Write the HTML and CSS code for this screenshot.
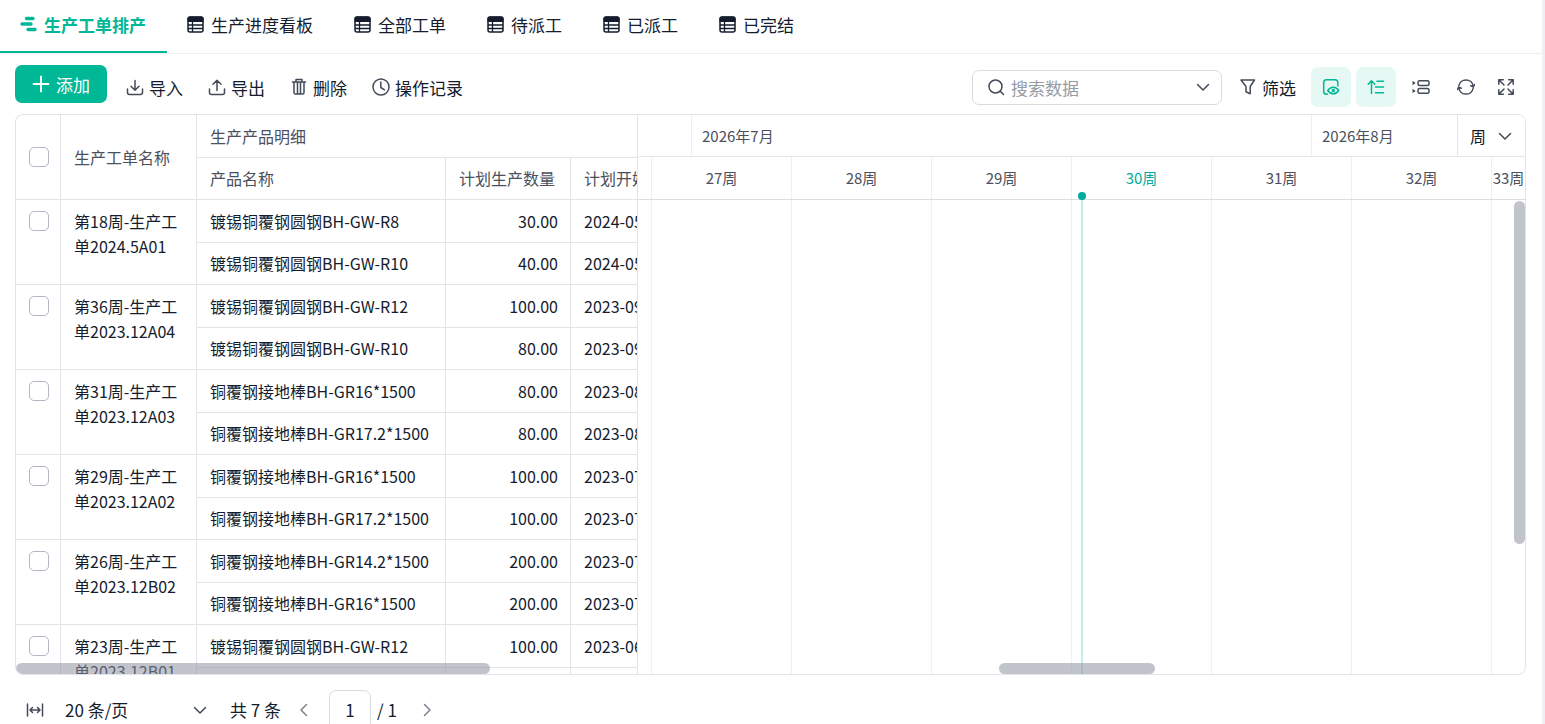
FILE: index.html
```html
<!DOCTYPE html>
<html lang="zh-CN">
<head>
    <title>生产工单排产</title>
    <meta charset="utf-8">
    <meta name="viewport" content="width=device-width, initial-scale=1.0">
    <link rel="stylesheet" href="styles.css">
</head>
<body>
<svg class="symbols" aria-hidden="true">
    <symbol id="i-table" viewBox="0 0 17 17">
        <rect x="1" y="1" width="15" height="15" rx="2" fill="none" stroke="currentColor" stroke-width="1.5"/>
        <path d="M.500 3q0-2.500 2.500-2.500h11q2.500 0 2.500 2.500v3H.500z" fill="currentColor"/>
        <path d="M1 9h15M1 12.500h15M5.500 5v11" fill="none" stroke="currentColor" stroke-width="1.300"/>
    </symbol>
    <symbol id="i-down" viewBox="0 0 14 14">
        <path d="M1.500 4.500l5.500 5.500 5.500-5.500" fill="none" stroke="currentColor" stroke-width="1.5" stroke-linecap="round" stroke-linejoin="round"/>
    </symbol>
</svg>
<div class="app">
    <nav class="tabs">
        <a class="tab tab-active" href="#">
            <svg class="tab-icon" viewBox="0 0 17 17"><path d="M6.500 2.500h6.500M2 8h9M8 13.500h7" fill="none" stroke="currentColor" stroke-width="3.400" stroke-linecap="round"/></svg>生产工单排产</a>
        <a class="tab" href="#"><svg class="tab-icon"><use href="#i-table"/></svg>生产进度看板</a>
        <a class="tab" href="#"><svg class="tab-icon"><use href="#i-table"/></svg>全部工单</a>
        <a class="tab" href="#"><svg class="tab-icon"><use href="#i-table"/></svg>待派工</a>
        <a class="tab" href="#"><svg class="tab-icon"><use href="#i-table"/></svg>已派工</a>
        <a class="tab" href="#"><svg class="tab-icon"><use href="#i-table"/></svg>已完结</a>
    </nav>

    <div class="toolbar">
        <button class="btn-add" type="button">
            <svg class="icon" viewBox="0 0 18 18"><path d="M9 1.500v15M1.500 9h15" fill="none" stroke="currentColor" stroke-width="1.800" stroke-linecap="round"/></svg>添加
        </button>
        <div class="actions">
            <button class="btn-text" type="button">
                <svg class="icon" viewBox="0 0 18 18"><path d="M9 2.500v9.500M5 8.200l4 4 4-4M1.500 11v3.500q0 2 2 2h11q2 0 2-2V11"/></svg>导入
            </button>
            <button class="btn-text" type="button">
                <svg class="icon" viewBox="0 0 18 18"><path d="M9 12.500V2.500M5 6.200l4-4 4 4M1.500 11v3.500q0 2 2 2h11q2 0 2-2V11"/></svg>导出
            </button>
            <button class="btn-text" type="button">
                <svg class="icon" viewBox="0 0 18 18"><path d="M2.500 4h13M6 4V1.500h6V4M4 4v10.500q0 1.500 1.500 1.500h7q1.500 0 1.500-1.500V4M7.500 4v12M10.500 4v12"/></svg>删除
            </button>
            <button class="btn-text" type="button">
                <svg class="icon" viewBox="0 0 18 18"><circle cx="9" cy="9" r="8"/><path d="M8.800 4v5.500l3.700 2.300"/></svg>操作记录
            </button>
        </div>
        <div class="tools">
            <label class="search">
                <svg class="icon" viewBox="0 0 18 18"><circle cx="8.500" cy="8.500" r="6.500"/><path d="M13.200 13.200l3.300 3.300"/></svg>
                <input class="search-input" type="text" placeholder="搜索数据" aria-label="搜索数据">
                <svg class="icon-s"><use href="#i-down"/></svg>
            </label>
            <button class="btn-text btn-filter" type="button">
                <svg class="icon" viewBox="0 0 18 18"><path d="M2 2h13.500l-4.300 6.500v7.300l-4.200-2V8.500z"/></svg>筛选
            </button>
            <div class="icon-group">
                <button class="btn-icon btn-on" type="button" aria-label="显示设置">
                    <svg class="icon" viewBox="0 0 18 18"><path d="M5.500 16.200H4.500q-2.800 0-2.800-2.800V4.500Q1.700 1.700 4.500 1.700h8.500Q15.800 1.700 15.800 4.500v3.500"/><path d="M5.700 12.500q2.400-3.300 5.600-3.300t5.400 3.300q-2.200 3.300-5.400 3.300t-5.600-3.300z"/><circle cx="11.300" cy="12.500" r="1"/></svg>
                </button>
                <button class="btn-icon btn-on" type="button" aria-label="排序">
                    <svg class="icon" viewBox="0 0 18 18"><path d="M4.500 15.500V3M1.200 6.200l3.300-3.400 3.300 3.400M10 3.200h6.500M8.500 9h8M8.500 14.800h8"/></svg>
                </button>
                <button class="btn-icon" type="button" aria-label="行高">
                    <svg class="icon" viewBox="0 0 18 18"><rect x="6" y="2.700" width="11" height="4.800" rx="1.500"/><rect x="6" y="10.500" width="11" height="4.800" rx="1.500"/><path d="M.500 2.800L3.700 5 .500 7.200zM.500 10.700l3.200 2.200-3.200 2.200z" fill="currentColor" stroke="none"/></svg>
                </button>
                <div class="icon-pair">
                    <button class="btn-icon" type="button" aria-label="刷新">
                        <svg class="icon" viewBox="0 0 18 18"><path d="M1.800 8A7.300 7.300 0 0 1 16.200 8M16.200 10A7.300 7.300 0 0 1 1.800 10M13.700 7.800l2.700 1 1.200-2.300M4.300 10.200l-2.700-1L.400 11.500"/></svg>
                    </button>
                    <button class="btn-icon" type="button" aria-label="全屏">
                        <svg class="icon" viewBox="0 0 18 18"><path d="M1.800 6.300V1.800h4.500M11.700 1.800h4.500v4.500M16.200 11.700v4.500h-4.500M6.300 16.200H1.800v-4.500M2 2l5 5M16 2l-5 5M16 16l-5-5M2 16l5-5"/></svg>
                    </button>
                </div>
            </div>
        </div>
    </div>

    <div class="panel">
        <div class="grid-pane">
            <table class="grid">
                <colgroup><col class="col-check"><col class="col-order"><col class="col-product"><col class="col-count"><col class="col-date"></colgroup>
                <thead>
                    <tr><th class="check-head" rowspan="2"><input type="checkbox" class="check" aria-label="全选"></th><th rowspan="2">生产工单名称</th><th colspan="3">生产产品明细</th></tr>
                    <tr><th>产品名称</th><th>计划生产数量</th><th>计划开始时间</th></tr>
                </thead>
                <tbody>
                    <tr><td class="cell-check" rowspan="2"><input type="checkbox" class="check" aria-label="第18周"></td><td class="order" rowspan="2">第18周-生产工单2024.5A01</td><td>镀锡铜覆钢圆钢BH-GW-R8</td><td class="num">30.00</td><td>2024-05-06</td></tr>
                    <tr><td>镀锡铜覆钢圆钢BH-GW-R10</td><td class="num">40.00</td><td>2024-05-06</td></tr>
                    <tr><td class="cell-check" rowspan="2"><input type="checkbox" class="check" aria-label="第36周"></td><td class="order" rowspan="2">第36周-生产工单2023.12A04</td><td>镀锡铜覆钢圆钢BH-GW-R12</td><td class="num">100.00</td><td>2023-09-04</td></tr>
                    <tr><td>镀锡铜覆钢圆钢BH-GW-R10</td><td class="num">80.00</td><td>2023-09-04</td></tr>
                    <tr><td class="cell-check" rowspan="2"><input type="checkbox" class="check" aria-label="第31周"></td><td class="order" rowspan="2">第31周-生产工单2023.12A03</td><td>铜覆钢接地棒BH-GR16*1500</td><td class="num">80.00</td><td>2023-08-01</td></tr>
                    <tr><td>铜覆钢接地棒BH-GR17.2*1500</td><td class="num">80.00</td><td>2023-08-01</td></tr>
                    <tr><td class="cell-check" rowspan="2"><input type="checkbox" class="check" aria-label="第29周"></td><td class="order" rowspan="2">第29周-生产工单2023.12A02</td><td>铜覆钢接地棒BH-GR16*1500</td><td class="num">100.00</td><td>2023-07-17</td></tr>
                    <tr><td>铜覆钢接地棒BH-GR17.2*1500</td><td class="num">100.00</td><td>2023-07-17</td></tr>
                    <tr><td class="cell-check" rowspan="2"><input type="checkbox" class="check" aria-label="第26周"></td><td class="order" rowspan="2">第26周-生产工单2023.12B02</td><td>铜覆钢接地棒BH-GR14.2*1500</td><td class="num">200.00</td><td>2023-07-01</td></tr>
                    <tr><td>铜覆钢接地棒BH-GR16*1500</td><td class="num">200.00</td><td>2023-07-01</td></tr>
                    <tr><td class="cell-check" rowspan="2"><input type="checkbox" class="check" aria-label="第23周"></td><td class="order" rowspan="2">第23周-生产工单2023.12B01</td><td>镀锡铜覆钢圆钢BH-GW-R12</td><td class="num">100.00</td><td>2023-06-05</td></tr>
                    <tr><td></td><td></td><td></td></tr>
                </tbody>
            </table>
            <div class="thumb thumb-grid"></div>
        </div>
        <div class="gantt">
            <div class="months">
                <div class="month"></div>
                <div class="month">2026年7月</div>
                <div class="month">2026年8月</div>
                <label class="scale">
                    <select class="scale-select" aria-label="时间刻度"><option>周</option></select>
                    <svg class="icon-s"><use href="#i-down"/></svg>
                </label>
            </div>
            <div class="weeks">
                <div class="week"></div>
                <div class="week">27周</div>
                <div class="week">28周</div>
                <div class="week">29周</div>
                <div class="week week-now">30周</div>
                <div class="week">31周</div>
                <div class="week">32周</div>
                <div class="week">33周</div>
            </div>
            <div class="lanes">
                <div class="lane"></div>
                <div class="lane"></div>
                <div class="lane"></div>
                <div class="lane"></div>
                <div class="lane lane-now"><div class="today"></div></div>
                <div class="lane"></div>
                <div class="lane"></div>
                <div class="lane"></div>
                <div class="thumb thumb-rows"></div>
                <div class="thumb thumb-time"></div>
            </div>
        </div>
    </div>

    <footer class="pager">
        <button class="pager-btn" type="button" aria-label="自适应列宽">
            <svg class="icon" viewBox="0 0 18 18"><path d="M1.500 3v12M16.500 3v12M4.500 9h9M6.500 6.500L4 9l2.500 2.500M11.500 6.500L14 9l-2.500 2.500"/></svg>
        </button>
        <label class="page-size">
            <select class="size-select" aria-label="每页条数"><option>20 条/页</option></select>
            <svg class="icon-s"><use href="#i-down"/></svg>
        </label>
        <span class="total">共 7 条</span>
        <button class="pager-btn pager-step" type="button" aria-label="上一页">
            <svg class="icon" viewBox="0 0 18 18"><path d="M11.500 3.500L6 9l5.500 5.500"/></svg>
        </button>
        <input class="page-input" type="text" value="1" aria-label="页码">
        <span class="page-count">/ 1</span>
        <button class="pager-btn pager-step" type="button" aria-label="下一页">
            <svg class="icon" viewBox="0 0 18 18"><path d="M6.500 3.500L12 9l-5.500 5.500"/></svg>
        </button>
    </footer>
</div>
</body>
</html>
```
FILE: styles.css
```css
* {
    box-sizing: border-box;
}
body {
    margin: 0;
    overflow: hidden;
    background-color: #fff;
    color: #141c2e;
    font-family: "Noto Sans CJK SC", sans-serif;
    font-size: 17px;
}
button, input, select {
    margin: 0;
    padding: 0;
    border: 0;
    background: none;
    color: inherit;
    font: inherit;
    outline: none;
}
select {
    appearance: none;
}
.symbols {
    display: none;
}
.app {
    display: flex;
    flex-direction: column;
    height: 100vh;
    border-right: 3px solid #efeff6;
}
.icon {
    flex: none;
    width: 18px;
    height: 18px;
    fill: none;
    stroke: currentColor;
    stroke-width: 1.5;
    stroke-linecap: round;
    stroke-linejoin: round;
}
.icon-s {
    flex: none;
    width: 14px;
    height: 14px;
    color: #434a59;
    pointer-events: none;
}

/* tabs */
.tabs {
    display: flex;
    flex: none;
    height: 54px;
    border-bottom: 1px solid #eeeff2;
}
.tab {
    display: flex;
    align-items: center;
    gap: 7px;
    padding: 0 21px 4px 20px;
    color: #141c2e;
    text-decoration: none;
    white-space: nowrap;
}
.tab-active {
    padding-bottom: 2px;
    border-bottom: 2px solid #00b796;
    color: #00b796;
    font-weight: bold;
}
.tab-icon {
    width: 17px;
    height: 17px;
}

/* toolbar */
.toolbar {
    display: flex;
    flex: none;
    align-items: center;
    height: 60px;
    padding: 0 16px 0 15px;
}
.btn-add {
    display: flex;
    align-items: center;
    justify-content: center;
    gap: 6px;
    width: 92px;
    height: 38px;
    border-radius: 7px;
    background-color: #00b796;
    color: #fff;
}
.actions {
    display: flex;
    gap: 25px;
    padding: 6px 0 0 19px;
}
.btn-text {
    display: flex;
    align-items: center;
    gap: 5px;
    white-space: nowrap;
}
.btn-text .icon {
    color: #434a59;
}
.tools {
    display: flex;
    align-items: center;
    margin-left: auto;
    padding-top: 6px;
}
.search {
    display: flex;
    align-items: center;
    gap: 6px;
    width: 250px;
    height: 35px;
    padding: 0 11px 0 14px;
    border: 1px solid #d9dbe3;
    border-radius: 7px;
    color: #434a59;
}
.search-input {
    flex: 1;
    min-width: 0;
}
.search-input::placeholder {
    color: #969ba5;
}
.btn-filter {
    margin: 0 15px 0 17px;
}
.icon-group {
    display: flex;
    gap: 5px;
}
.icon-pair {
    display: flex;
}
.btn-icon {
    display: flex;
    align-items: center;
    justify-content: center;
    width: 40px;
    height: 40px;
    border-radius: 7px;
    color: #434a59;
}
.btn-on {
    background-color: #e5f8f4;
    color: #00b796;
}

/* table and gantt */
.panel {
    display: flex;
    flex: 1;
    min-height: 0;
    margin: 0 16px 0 15px;
    border: 1px solid #e3e4ea;
    border-radius: 8px;
    overflow: hidden;
}
.grid-pane {
    position: relative;
    flex: 0 0 622px;
    border-right: 1px solid #e3e4ea;
    overflow: hidden;
}
.grid {
    width: 735px;
    table-layout: fixed;
    border-spacing: 0;
    font-size: 16px;
    line-height: 25px;
}
.col-check {
    width: 45px;
}
.col-order {
    width: 136px;
}
.col-product {
    width: 249px;
}
.col-count {
    width: 125px;
}
.col-date {
    width: 180px;
}
.grid tr {
    height: 43px;
}
.grid tr:nth-child(even) {
    height: 42px;
}
.grid th, .grid td {
    padding: 0 12px 0 13px;
    border-right: 1px solid #e3e4ea;
    border-bottom: 1px solid #e3e4ea;
    text-align: left;
    white-space: nowrap;
}
.grid th {
    color: #4b505c;
    font-weight: normal;
}
.grid .order {
    padding: 9px 12px 0 13px;
    vertical-align: top;
    white-space: normal;
}
.grid .num {
    text-align: right;
}
.grid .cell-check {
    padding-top: 11px;
    vertical-align: top;
}
.check {
    display: block;
    width: 20px;
    height: 20px;
    border: 1px solid #b3b6c3;
    border-radius: 5px;
    background-color: #fff;
    appearance: none;
}
.gantt {
    display: flex;
    flex: 1;
    flex-direction: column;
    min-width: 0;
    color: #4b505c;
    font-size: 15px;
}
.months {
    position: relative;
    display: grid;
    flex: none;
    grid-template-columns: 54px 620px 1fr;
    height: 42px;
    border-bottom: 1px solid #e5e6e9;
}
.month {
    display: flex;
    align-items: center;
    padding-left: 10px;
    border-right: 1px solid #eeeff1;
}
.scale {
    position: absolute;
    top: 0;
    right: 0;
    bottom: 0;
    display: flex;
    align-items: center;
    width: 68px;
    padding: 0 13px 0 12px;
    border-left: 1px solid #e3e4ea;
    background-color: #fff;
    color: #141c2e;
    font-size: 16px;
}
.scale-select {
    flex: 1;
    min-width: 0;
}
.weeks, .lanes {
    display: grid;
    grid-template-columns: 14px repeat(6, 140px) 1fr;
}
.weeks {
    flex: none;
    height: 43px;
    border-bottom: 1px solid #dcdde0;
}
.week {
    display: flex;
    align-items: center;
    justify-content: center;
    min-width: 0;
    padding-bottom: 2px;
    border-right: 1px solid #eeeff1;
    white-space: nowrap;
}
.week:last-child, .lane:nth-child(8) {
    border-right: 0;
}
.week-now {
    color: #00ab9f;
}
.lanes {
    position: relative;
    flex: 1;
}
.lane {
    border-right: 1px solid #f0f0f3;
}
.lane-now {
    position: relative;
}
.today {
    position: absolute;
    top: 0;
    bottom: 0;
    left: 9px;
    width: 2px;
    background-color: #c6ece9;
}
.today::before {
    content: "";
    position: absolute;
    top: -8px;
    left: -3px;
    width: 8px;
    height: 8px;
    border-radius: 50%;
    background-color: #00ab9f;
}
.thumb {
    position: absolute;
    border-radius: 6px;
    background-color: rgba(144, 148, 162, .55);
}
.thumb-grid {
    bottom: 0;
    left: 0;
    width: 474px;
    height: 11px;
}
.thumb-rows {
    top: 1px;
    right: 0;
    width: 11px;
    height: 343px;
}
.thumb-time {
    bottom: 0;
    left: 361px;
    width: 156px;
    height: 11px;
}

/* pager */
.pager {
    display: flex;
    flex: none;
    align-items: flex-start;
    height: 49px;
    padding: 15px 16px 0 26px;
    line-height: 40px;
    white-space: nowrap;
}
.pager-btn {
    display: flex;
    align-items: center;
    justify-content: center;
    height: 40px;
    color: #434a59;
}
.pager-step {
    width: 18px;
    color: #7d828e;
}
.page-size {
    display: flex;
    align-items: center;
    width: 142px;
    height: 40px;
    margin: 0 23px 0 21px;
}
.size-select {
    flex: 1;
    height: 40px;
}
.total {
    margin-right: 14px;
}
.page-input {
    width: 42px;
    height: 40px;
    margin: 0 6px 0 16px;
    border: 1px solid #d9dbe3;
    border-radius: 7px;
    text-align: center;
}
.page-count {
    margin-right: 21px;
}
```
